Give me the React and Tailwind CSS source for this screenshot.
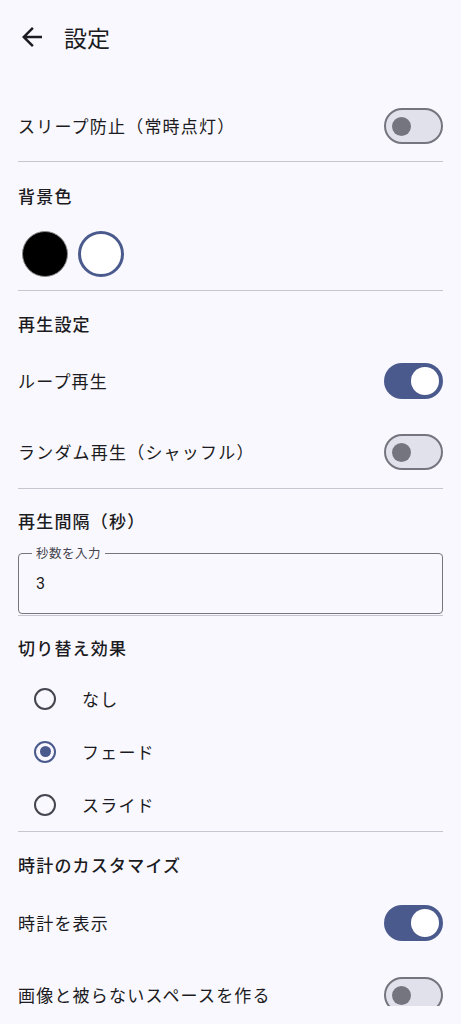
import { useState } from "react";

const font = { fontFamily: '"Noto Sans CJK JP", "Noto Sans", sans-serif' };

function Toggle({ on }) {
  return on ? (
    <div className="w-[59px] h-[36px] rounded-full bg-[#4a5a8d] flex items-center justify-end pr-[4px] shrink-0">
      <div className="w-[28px] h-[28px] rounded-full bg-white" />
    </div>
  ) : (
    <div className="w-[59px] h-[36px] rounded-full bg-[#e1e1ec] border-[2.5px] border-[#75757f] flex items-center pl-[6px] shrink-0">
      <div className="w-[19px] h-[19px] rounded-full bg-[#75757f]" />
    </div>
  );
}

function SwitchRow({ label, on, className = "" }) {
  return (
    <div className={`h-[56px] flex items-center justify-between ${className}`}>
      <span className="text-[17px] leading-[18px] tracking-[1.2px] text-[#1b1b21]">{label}</span>
      <Toggle on={on} />
    </div>
  );
}

function Heading({ children, className = "" }) {
  return (
    <div className={`h-[24px] flex items-center text-[17px] tracking-[1.2px] font-medium text-[#1b1b21] ${className}`}>
      {children}
    </div>
  );
}

function Divider({ className = "" }) {
  return <div className={`h-px bg-[#c6c5d0] ${className}`} />;
}

function Radio({ label, checked }) {
  return (
    <div className="h-[53px] flex items-center">
      <div className="w-[54px] flex justify-center">
        {checked ? (
          <div className="w-[22px] h-[22px] rounded-full border-2 border-[#4a5a8d] flex items-center justify-center">
            <div className="w-[11px] h-[11px] rounded-full bg-[#4a5a8d]" />
          </div>
        ) : (
          <div className="w-[22px] h-[22px] rounded-full border-2 border-[#45464f]" />
        )}
      </div>
      <span className="ml-[10px] text-[17px] tracking-[1.2px] text-[#1b1b21]">{label}</span>
    </div>
  );
}

export default function App() {
  const [seconds] = useState("3");

  return (
    <div className="w-[461px] h-[1024px] bg-[#f9f8fe]" style={font}>
      <div className="h-[1006px] overflow-hidden">
        <header className="h-[74px] flex items-center">
          <svg viewBox="0 0 24 24" className="w-[30px] h-[30px] ml-[17px] fill-[#1b1b21]">
            <path d="M20 11H7.83l5.59-5.59L12 4l-8 8 8 8 1.41-1.41L7.83 13H20v-2z" />
          </svg>
          <h1 className="ml-[17px] text-[23px] text-[#1b1b21]">設定</h1>
        </header>

        <div className="px-[18px]">
          <SwitchRow label="スリープ防止（常時点灯）" on={false} className="mt-[24px]" />
          <Divider className="mt-[7px]" />

          <Heading className="mt-[22px]">背景色</Heading>
          <div className="mt-[23px] flex gap-[10px] pl-[4px]">
            <div className="w-[46px] h-[46px] rounded-full bg-black border border-[#8a8a8a]" />
            <div className="w-[46px] h-[46px] rounded-full bg-white border-[3px] border-[#4a5a8d]" />
          </div>
          <Divider className="mt-[13px]" />

          <Heading className="mt-[21px]">再生設定</Heading>
          <SwitchRow label="ループ再生" on className="mt-[17px]" />
          <SwitchRow label="ランダム再生（シャッフル）" on={false} className="mt-[15px]" />
          <Divider className="mt-[8px]" />

          <Heading className="mt-[20px]">再生間隔（秒）</Heading>
          <div className="relative mt-[20px] h-[61px] rounded-[4px] border border-[#75767f] flex items-center px-[17px]">
            <span className="absolute -top-[9px] left-[13px] px-[4px] bg-[#f9f8fe] text-[12.5px] leading-[16px] tracking-[0.5px] text-[#45464f]">
              秒数を入力
            </span>
            <span className="text-[16px] text-[#1b1b21]" style={{ fontFamily: "Roboto, sans-serif" }}>
              {seconds}
            </span>
          </div>
          <Divider className="mt-px" />

          <Heading className="mt-[20px]">切り替え効果</Heading>
          <div className="mt-[12px]">
            <Radio label="なし" />
            <Radio label="フェード" checked />
            <Radio label="スライド" />
          </div>
          <Divider />

          <Heading className="mt-[21px]">時計のカスタマイズ</Heading>
          <SwitchRow label="時計を表示" on className="mt-[18px]" />
          <SwitchRow label="画像と被らないスペースを作る" on={false} className="mt-[16px]" />
        </div>
      </div>
    </div>
  );
}
